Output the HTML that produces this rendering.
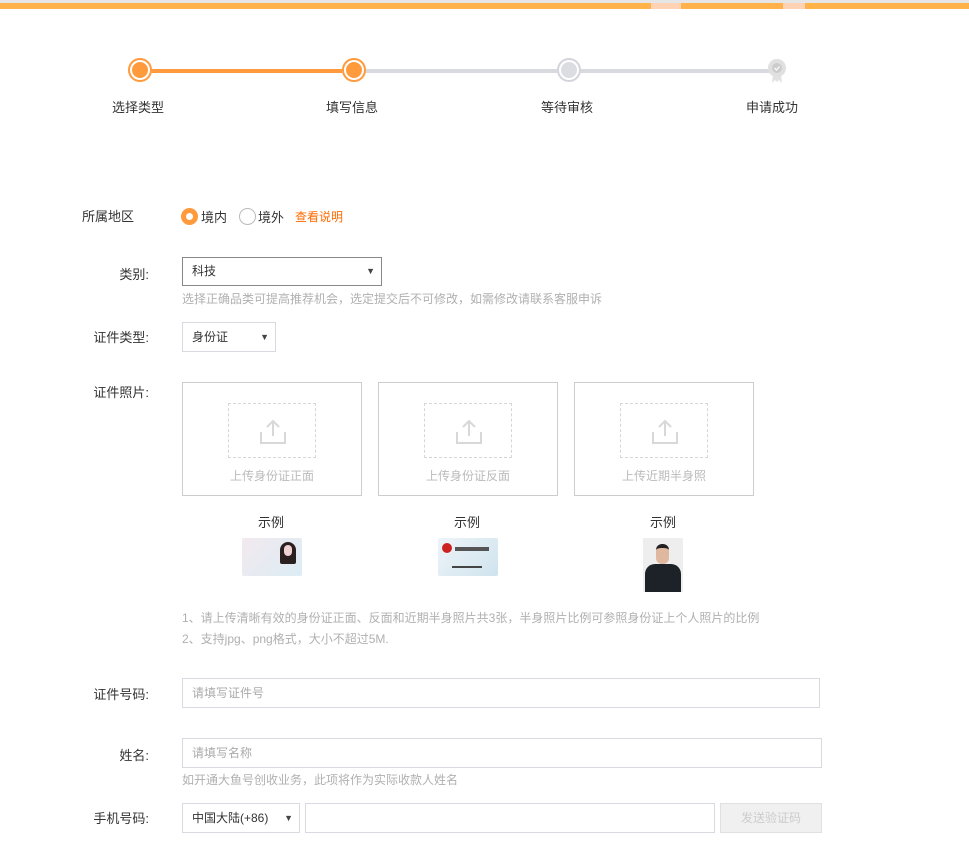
<!DOCTYPE html>
<html><head><meta charset="utf-8"><style>
body{margin:0;width:969px;height:854px;background:#fff;position:relative;overflow:hidden;font-family:"Liberation Sans","Noto Sans CJK SC",sans-serif;font-size:13px;color:#333}
.a{position:absolute}
.lbl{position:absolute;right:820px;text-align:right;white-space:nowrap}
.circ{position:absolute;width:24px;height:24px;border-radius:50%;box-sizing:border-box}
.box{position:absolute;border:1px solid #ccc;width:180px;height:114px;box-sizing:border-box}
.dash{position:absolute;left:45px;top:20px;width:88px;height:55px;border:1px dashed #d6d6d6;box-sizing:border-box}
.cap{position:absolute;top:84px;width:100%;text-align:center;color:#bbb;font-size:12px}
.inp{position:absolute;border:1px solid #d9d9e0;box-sizing:border-box;background:#fff;color:#aaa;font-size:12px;padding-left:9px}
.hint{position:absolute;color:#b0b0b0;font-size:12px}
</style></head><body>
<div class="a" style="left:0;top:0;width:969px;height:3px;background:#e6e6e6"></div>
<div class="a" style="left:0;top:3px;width:969px;height:6px;background:#ffb14a"></div>
<div class="a" style="left:651px;top:3px;width:30px;height:6px;background:#ffd2b3"></div>
<div class="a" style="left:783px;top:3px;width:22px;height:6px;background:#ffd2b3"></div>
<div class="a" style="left:140px;top:69px;width:214px;height:4px;background:#ff9b3d"></div>
<div class="a" style="left:354px;top:69px;width:423px;height:4px;background:#d9d9e0"></div>
<div class="circ" style="left:128px;top:58px;background:#ff9b3d;box-shadow:inset 0 0 0 2px #ff9b3d,inset 0 0 0 4px #fff"></div>
<div class="circ" style="left:342px;top:58px;background:#ff9b3d;box-shadow:inset 0 0 0 2px #ff9b3d,inset 0 0 0 4px #fff"></div>
<div class="circ" style="left:557px;top:58px;background:#dcdce3;box-shadow:inset 0 0 0 2px #d4d4dc,inset 0 0 0 4px #fff"></div>
<svg class="a" style="left:766px;top:56px" width="22" height="28" viewBox="0 0 22 28"><path d="M7 18 L6 27 L9 24 L11 26 L13 24 L16 27 L15 18Z" fill="#e2e2e2"/><circle cx="11" cy="12" r="9" fill="#e0e0e0"/><circle cx="11" cy="12" r="5" fill="#ccc"/><path d="M8.5 12l2 2 3-3.5" stroke="#fff" stroke-width="1.2" fill="none"/></svg>
<div class="a" style="left:112px;top:97px">选择类型</div>
<div class="a" style="left:326px;top:97px">填写信息</div>
<div class="a" style="left:541px;top:97px">等待审核</div>
<div class="a" style="left:746px;top:97px">申请成功</div>
<div class="a" style="left:82px;top:206px">所属地区</div>
<div class="circ" style="left:181px;top:208px;width:17px;height:17px;border:5px solid #ff9b3d;background:#fff"></div>
<div class="a" style="left:201px;top:207px">境内</div>
<div class="circ" style="left:239px;top:208px;width:17px;height:17px;border:1px solid #bbb"></div>
<div class="a" style="left:258px;top:207px">境外</div>
<div class="a" style="left:295px;top:208px;color:#ff6a00;font-size:12px">查看说明</div>
<div class="lbl" style="top:264px">类别:</div>
<div class="inp" style="left:182px;top:257px;width:200px;height:29px;border-color:#888;color:#333;line-height:27px">科技<span style="position:absolute;right:6px;font-size:9px;color:#444">▼</span></div>
<div class="hint" style="left:182px;top:290px">选择正确品类可提高推荐机会，选定提交后不可修改，如需修改请联系客服申诉</div>
<div class="lbl" style="top:327px">证件类型:</div>
<div class="inp" style="left:182px;top:322px;width:94px;height:30px;color:#333;line-height:28px">身份证<span style="position:absolute;right:6px;font-size:9px;color:#444">▼</span></div>
<div class="lbl" style="top:382px">证件照片:</div>
<div class="box" style="left:182px;top:382px"><div class="dash"></div><svg class="a" style="left:76px;top:36px" width="28" height="26"><path d="M14 2v15M8 8l6-6 6 6M2 13v11h24V13" stroke="#d8d8d8" stroke-width="2" fill="none"/></svg><div class="cap">上传身份证正面</div></div>
<div class="box" style="left:378px;top:382px"><div class="dash"></div><svg class="a" style="left:76px;top:36px" width="28" height="26"><path d="M14 2v15M8 8l6-6 6 6M2 13v11h24V13" stroke="#d8d8d8" stroke-width="2" fill="none"/></svg><div class="cap">上传身份证反面</div></div>
<div class="box" style="left:574px;top:382px"><div class="dash"></div><svg class="a" style="left:76px;top:36px" width="28" height="26"><path d="M14 2v15M8 8l6-6 6 6M2 13v11h24V13" stroke="#d8d8d8" stroke-width="2" fill="none"/></svg><div class="cap">上传近期半身照</div></div>
<div class="a" style="left:258px;top:512px">示例</div>
<div class="a" style="left:454px;top:512px">示例</div>
<div class="a" style="left:650px;top:512px">示例</div>
<div class="a" style="left:242px;top:538px;width:60px;height:38px;background:linear-gradient(135deg,#f3e9ef,#dcecf5);border-radius:2px"><div class="a" style="left:38px;top:4px;width:16px;height:22px;background:#2a2020;border-radius:8px 8px 2px 2px"></div><div class="a" style="left:42px;top:7px;width:8px;height:11px;background:#f1d2d2;border-radius:4px"></div></div>
<div class="a" style="left:438px;top:538px;width:60px;height:38px;background:linear-gradient(135deg,#eef4f8,#cfe3ee);border-radius:2px"><div class="a" style="left:4px;top:5px;width:10px;height:10px;background:#c22;border-radius:50%"></div><div class="a" style="left:17px;top:9px;width:34px;height:4px;background:#555"></div><div class="a" style="left:14px;top:28px;width:30px;height:2px;background:#444"></div></div>
<div class="a" style="left:643px;top:538px;width:40px;height:54px;background:#eee;overflow:hidden"><div class="a" style="left:13px;top:6px;width:13px;height:16px;background:#e0b8a0;border-radius:6px;border-top:4px solid #222"></div><div class="a" style="left:2px;top:26px;width:36px;height:30px;background:#1d2228;border-radius:10px 10px 0 0"></div></div>
<div class="hint" style="left:182px;top:609px">1、请上传清晰有效的身份证正面、反面和近期半身照片共3张，半身照片比例可参照身份证上个人照片的比例</div>
<div class="hint" style="left:182px;top:630px">2、支持jpg、png格式，大小不超过5M.</div>
<div class="lbl" style="top:684px">证件号码:</div>
<div class="inp" style="left:182px;top:678px;width:638px;height:30px;line-height:28px">请填写证件号</div>
<div class="lbl" style="top:745px">姓名:</div>
<div class="inp" style="left:182px;top:738px;width:640px;height:30px;line-height:28px">请填写名称</div>
<div class="hint" style="left:182px;top:771px">如开通大鱼号创收业务，此项将作为实际收款人姓名</div>
<div class="lbl" style="top:808px">手机号码:</div>
<div class="inp" style="left:182px;top:803px;width:118px;height:30px;line-height:28px;color:#333">中国大陆(+86)<span style="position:absolute;right:6px;font-size:9px;color:#444">▼</span></div>
<div class="inp" style="left:305px;top:803px;width:410px;height:30px"></div>
<div class="a" style="left:720px;top:803px;width:102px;height:30px;background:#f0f0f0;border:1px solid #e0e0e0;box-sizing:border-box;color:#ccc;font-size:12px;text-align:center;line-height:28px">发送验证码</div>
</body></html>
